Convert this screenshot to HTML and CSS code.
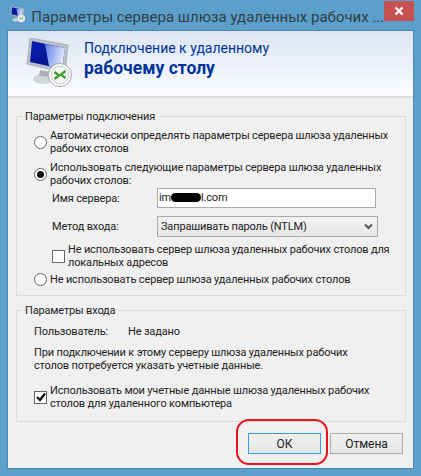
FILE: index.html
```html
<!DOCTYPE html>
<html lang="ru">
<head>
  <meta charset="UTF-8">
  <title>Параметры сервера шлюза</title>
  <link rel="stylesheet" href="styles.css">
</head>
<body>
  <svg class="defs" width="0" height="0">
    <defs>
      <linearGradient id="screen" x1="0" y1="0" x2="1" y2="1">
        <stop offset="0" stop-color="#0a1fb8"/>
        <stop offset="1" stop-color="#00107a"/>
      </linearGradient>
      <linearGradient id="shine" x1="0" y1="0" x2="1" y2="0.3">
        <stop offset="0" stop-color="#5f7fe8"/>
        <stop offset="1" stop-color="#dfe7fb"/>
      </linearGradient>
      <symbol id="rdp" viewBox="0 0 46 50">
        <ellipse cx="18" cy="41" rx="11" ry="5" fill="#d2d6d8"/>
        <path d="M14 32 L26 34 L26 39 L13 38Z" fill="#a9afb3"/>
        <path d="M4 0 L42 7 L39 35 L1 26Z" fill="#bcc2c7" stroke="#8f979d" stroke-width="0.6"/>
        <path d="M6 3 L39 10 L36 31 L4 24Z" fill="url(#screen)"/>
        <path d="M19 6 L39 10 L36 31 L23 28Z" fill="url(#shine)"/>
        <circle cx="34" cy="37" r="11.5" fill="#fff" stroke="#a4a9ab"/>
        <circle cx="34" cy="37" r="9" fill="#f3f5f3" stroke="#c5cac6"/>
        <path d="M28.5 34 L33 37.5 L28.5 41 M39.5 33 L35 36.5 L39.5 40" stroke="#3f9e35" stroke-width="2.4" fill="none"/>
      </symbol>
    </defs>
  </svg>

  <div class="window">
    <div class="titlebar">
      <svg class="title-icon"><use href="#rdp"/></svg>
      <span class="title-text">Параметры сервера шлюза удаленных рабочих ...</span>
      <div class="close">
        <svg width="10" height="10" viewBox="0 0 10 10"><path d="M1.5 1.5 L8.5 8.5 M8.5 1.5 L1.5 8.5" stroke="#fff" stroke-width="2.4"/></svg>
      </div>
    </div>

    <div class="client">
      <div class="banner">
        <svg class="banner-icon"><use href="#rdp"/></svg>
        <div class="banner-text">
          <div class="banner-line">Подключение к удаленному</div>
          <div class="banner-bold">рабочему столу</div>
        </div>
      </div>

      <div class="content">
        <fieldset class="group group-conn">
          <legend>Параметры подключения</legend>

          <div class="option">
            <span class="radio"></span>
            <div>Автоматически определять параметры сервера шлюза удаленных<br>рабочих столов</div>
          </div>
          <div class="option">
            <span class="radio checked"></span>
            <div>Использовать следующие параметры сервера шлюза удаленных<br>рабочих столов:</div>
          </div>

          <div class="field">
            <label>Имя сервера:</label>
            <div class="input">im<span class="blot"></span>l.com</div>
          </div>
          <div class="field field-select">
            <label>Метод входа:</label>
            <div class="select">
              <span>Запрашивать пароль (NTLM)</span>
              <svg width="9" height="7" viewBox="0 0 9 7"><path d="M1 1.5 L4.5 5 L8 1.5" stroke="#555" stroke-width="2" fill="none"/></svg>
            </div>
          </div>

          <div class="option option-sub">
            <span class="check"></span>
            <div>Не использовать сервер шлюза удаленных рабочих столов для<br>локальных адресов</div>
          </div>
          <div class="option option-last">
            <span class="radio"></span>
            <div>Не использовать сервер шлюза удаленных рабочих столов</div>
          </div>
        </fieldset>

        <fieldset class="group group-login">
          <legend>Параметры входа</legend>
          <div class="user-row">
            <span class="user-label">Пользователь:</span>
            <span>Не задано</span>
          </div>
          <p class="note">При подключении к этому серверу шлюза удаленных рабочих<br>столов потребуется указать учетные данные.</p>
          <div class="option option-creds">
            <span class="check">
              <svg width="10" height="10" viewBox="0 0 10 10"><path d="M1 5 L4 8 L9 1.5" stroke="#111" stroke-width="2.2" fill="none"/></svg>
            </span>
            <div>Использовать мои учетные данные шлюза удаленных рабочих<br>столов для удаленного компьютера</div>
          </div>
        </fieldset>

        <div class="buttons">
          <button class="button button-default">ОК</button>
          <button class="button">Отмена</button>
        </div>
      </div>

      <div class="highlight"></div>
    </div>
  </div>
</body>
</html>
```

FILE: styles.css
```css
body {
  margin: 0;
  font-family: Roboto, Arial, sans-serif;
  font-size: 11px;
  line-height: 13px;
  letter-spacing: -0.16px;
  color: #222;
}
.defs {
  position: absolute;
}
.window {
  height: 476px;
  box-sizing: border-box;
  padding: 0 7px 7px 7px;
  background-color: #5b9fca;
  display: flex;
  flex-direction: column;
}
.titlebar {
  height: 30px;
  flex: none;
  display: flex;
  align-items: flex-start;
}
.title-icon {
  width: 16px;
  height: 17px;
  margin: 6px 6px 0 3px;
}
.title-text {
  font-size: 15px;
  line-height: 20px;
  letter-spacing: normal;
  margin-top: 7px;
  color: #2f4046;
  flex: 1;
  white-space: nowrap;
}
.close {
  width: 31px;
  height: 20px;
  margin: 1px 0 0 0;
  background-color: #c75050;
  display: flex;
  align-items: center;
  justify-content: center;
}
.client {
  position: relative;
  flex: 1;
  border: 1px solid #4a86ad;
  background-color: #f0f0f0;
  display: flex;
  flex-direction: column;
}
.banner {
  height: 65px;
  flex: none;
  display: flex;
  background: linear-gradient(#dbe5f2, #fbfcfe);
  border-bottom: 2px solid #dcdcdc;
}
.banner-icon {
  width: 46px;
  height: 50px;
  margin: 7px 12px 0 18px;
}
.banner-text {
  margin-top: 8px;
  color: #003399;
  letter-spacing: normal;
}
.banner-line {
  font-size: 14px;
  line-height: 19px;
}
.banner-bold {
  font-size: 17.5px;
  line-height: 20px;
  font-weight: bold;
}
.content {
  flex: 1;
  padding: 12px 7px 0 8px;
  display: flex;
  flex-direction: column;
}
.group {
  margin: 0;
  padding: 0 17px;
  border: 1px solid #dcdcdc;
  min-width: 0;
  white-space: nowrap;
}
.group legend {
  padding: 0 3px;
  margin-left: -12px;
  line-height: 13px;
}
.group-conn {
  height: 186px;
  box-sizing: border-box;
}
.group-login {
  height: 118px;
  box-sizing: border-box;
  margin-top: 8px;
}
.option {
  display: flex;
  align-items: center;
  gap: 3px;
  margin-top: 6px;
}
.option-sub {
  margin: 6px 0 0 18px;
}
.option-last {
  margin-top: 4px;
}
.option-creds {
  margin-top: 12px;
}
.radio {
  width: 11px;
  height: 11px;
  flex: none;
  border: 1px solid #666;
  border-radius: 50%;
  background-color: #fff;
  display: flex;
  align-items: center;
  justify-content: center;
}
.radio.checked::after {
  content: "";
  width: 7px;
  height: 7px;
  border-radius: 50%;
  background-color: #111;
}
.check {
  width: 11px;
  height: 11px;
  flex: none;
  border: 1px solid #666;
  background-color: #fff;
  display: flex;
  align-items: center;
  justify-content: center;
}
.field {
  display: flex;
  align-items: center;
  margin: 1px 0 0 18px;
}
.field label {
  width: 105px;
}
.field-select {
  margin-top: 8px;
}
.input {
  width: 216px;
  height: 18px;
  border: 1px solid #aaa;
  background-color: #fff;
  line-height: 18px;
  padding-left: 1px;
}
.blot {
  display: inline-block;
  width: 30px;
  height: 9px;
  background-color: #000;
  border-radius: 5px;
  vertical-align: -1px;
}
.select {
  width: 212px;
  height: 19px;
  border: 1px solid #aaa;
  background: linear-gradient(#f3f3f3, #e6e6e6);
  display: flex;
  align-items: center;
  justify-content: space-between;
  padding: 0 4px 0 3px;
}
.user-row {
  display: flex;
  margin-top: 8px;
}
.user-label {
  width: 94px;
}
.note {
  margin: 8px 0 0 0;
}
.buttons {
  display: flex;
  justify-content: flex-end;
  gap: 9px;
  margin-top: 11px;
  padding-right: 3px;
}
.button {
  width: 73px;
  height: 21px;
  padding: 0;
  font-family: inherit;
  font-size: 12px;
  color: #222;
  border: 1px solid #acacac;
  background: linear-gradient(#f0f0f0, #e5e5e5);
}
.button-default {
  border-color: #3c9ade;
}
.highlight {
  position: absolute;
  left: 228px;
  top: 388px;
  width: 88px;
  height: 42px;
  border: 2px solid #e8141a;
  border-radius: 13px;
}
```
